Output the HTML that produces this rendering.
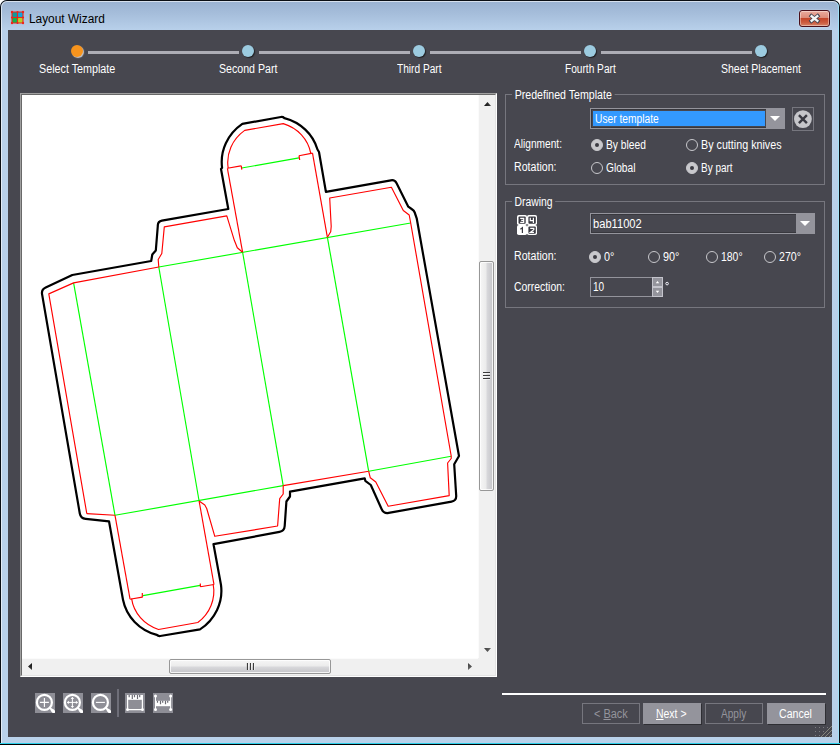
<!DOCTYPE html>
<html>
<head>
<meta charset="utf-8">
<title>Layout Wizard</title>
<style>
*{box-sizing:border-box;margin:0;padding:0}
html,body{width:840px;height:745px;overflow:hidden;background:#fff}
body{font-family:"Liberation Sans",sans-serif;font-size:12px;color:#fff;position:relative}
.abs{position:absolute}
#win{position:absolute;left:0;top:0;width:840px;height:745px;border-radius:7px 7px 0 0;overflow:hidden;
 background:linear-gradient(to bottom,#99b1d0 0px,#a6bedb 14px,#b8d0ea 30px,#b9d1ea 100%);}
#winedge{position:absolute;left:0;top:0;width:840px;height:745px;border-radius:7px 7px 0 0;border:1px solid #0a0e14;border-bottom:none}
#winhi{position:absolute;left:1px;top:1px;width:838px;height:742px;border-radius:6px 6px 0 0;border:1px solid rgba(255,255,255,.6);border-bottom:none;border-right-color:rgba(160,228,250,.9)}
#title{position:absolute;left:29.200px;top:11.6px;font-size:12px;line-height:14px;color:#000;white-space:nowrap;transform-origin:0 0;transform:scaleX(.988)}
#client{position:absolute;left:8px;top:30px;width:824px;height:707px;background:#47474f}
#closebtn{position:absolute;left:799px;top:10px;width:31px;height:17px;border:1px solid #4a0f1a;border-radius:3px;
 background:linear-gradient(to bottom,#eaab9e 0%,#dc8a78 47%,#c4462b 50%,#cb5a3e 75%,#d88266 100%);box-shadow:inset 0 0 0 1px rgba(255,255,255,.4),0 0 2px rgba(255,255,255,.5)}
.lbl{position:absolute;white-space:nowrap;font-size:12px;line-height:14px;color:#fff;transform-origin:0 0}
.stepline{position:absolute;top:51px;height:3px;background:#adadb5}
.dot{position:absolute;width:12px;height:12px;border-radius:50%;background:#9ccbe0;box-shadow:1px 1px 1px rgba(0,0,0,.55)}
.grp{position:absolute;border:1px solid #76767e}
.grp>span{position:absolute;left:6px;top:-7px;background:#47474f;padding:0 3px;font-size:12px;line-height:14px;white-space:nowrap;transform-origin:0 0}
.radio{position:absolute;width:12px;height:12px;border-radius:50%;border:1px solid #c8c8cc;background:#47474f}
.radio.on{background:#c8c8cc;border-color:#c8c8cc}
.radio.on:after{content:"";position:absolute;left:3px;top:3px;width:4px;height:4px;border-radius:50%;background:#3a3a42}
.combo{position:absolute;height:21px;border:1px solid #94949c;background:#47474f;box-shadow:inset 0 0 0 1px #38383e}
.combo .dd{position:absolute;right:-1px;top:-1px;width:19px;height:21px;background:#94949c}
.combo .dd:after{content:"";position:absolute;left:3.600px;top:8px;border-left:5px solid transparent;border-right:5px solid transparent;border-top:5px solid #fff}
.btn{position:absolute;top:703px;width:58px;height:21px;font-size:12px;white-space:nowrap}
.btn span{position:absolute;top:3.8px;line-height:14px;transform-origin:0 0;white-space:nowrap}
.btn.en{background:#94949c;color:#fff;box-shadow:1px 1px 0 rgba(0,0,0,.35)}
.btn.dis{border:1px solid #76767e;color:#94949c}
.btn.dis span{margin:-1px 0 0 -1px}
.tb{position:absolute;top:693px;width:20px;height:20px;background:#8c8c94}
u{text-decoration:underline}
</style>
</head>
<body>
<div id="win"></div>
<div id="winedge"></div>
<div id="winhi"></div>

<!-- title bar -->
<svg class="abs" style="left:10px;top:10px" width="15" height="15" viewBox="0 0 15 15">
 <rect x="2" y="2" width="5.500" height="5.500" fill="#0f9a9c"/>
 <rect x="7.500" y="2" width="5.500" height="5.500" fill="#12a6dc"/>
 <rect x="2" y="7.500" width="5.500" height="5.500" fill="#12b24e"/>
 <rect x="7.500" y="7.500" width="5.500" height="5.500" fill="#b4d22c"/>
 <path d="M2 2H13V13H2Z M7.500 2V13 M2 7.500H13" stroke="#e8281c" stroke-width="1.100" fill="none"/>
 <g fill="#f02418"><circle cx="2" cy="2" r="1.200"/><circle cx="7.500" cy="2" r="1.100"/><circle cx="13" cy="2" r="1.200"/><circle cx="2" cy="7.500" r="1.100"/><circle cx="13" cy="7.500" r="1.100"/><circle cx="2" cy="13" r="1.200"/><circle cx="7.500" cy="13" r="1.100"/><circle cx="13" cy="13" r="1.200"/><circle cx="7.500" cy="7.500" r="1"/></g>
</svg>
<div id="title">Layout Wizard</div>
<div id="closebtn"></div>
<svg class="abs" style="left:807px;top:12px" width="15" height="13" viewBox="0 0 15 13">
 <path d="M4.400 4L10.600 9M10.600 4L4.400 9" stroke="#3c4252" stroke-width="3.800" fill="none" stroke-linecap="square"/>
 <path d="M4.600 4.200L10.400 8.800M10.400 4.200L4.600 8.800" stroke="#f4f4f4" stroke-width="2.300" fill="none" stroke-linecap="square"/>
</svg>

<div id="client"></div>

<!-- steps -->
<div class="stepline" style="left:88px;width:151px"></div>
<div class="stepline" style="left:259px;width:151px"></div>
<div class="stepline" style="left:430px;width:151px"></div>
<div class="stepline" style="left:601px;width:151px"></div>
<div class="dot" style="left:71px;top:45px;background:#f7941d;box-shadow:1px 1px 1px rgba(255,255,255,.7)"></div>
<div class="dot" style="left:242px;top:45px"></div>
<div class="dot" style="left:413px;top:45px"></div>
<div class="dot" style="left:584px;top:45px"></div>
<div class="dot" style="left:755px;top:45px"></div>
<div class="lbl" id="s1" style="left:38.5px;top:61.8px;transform:scaleX(.896)">Select Template</div>
<div class="lbl" id="s2" style="left:219px;top:61.8px;transform:scaleX(.884)">Second Part</div>
<div class="lbl" id="s3" style="left:397.3px;top:61.8px;transform:scaleX(.845)">Third Part</div>
<div class="lbl" id="s4" style="left:565.3px;top:61.8px;transform:scaleX(.845)">Fourth Part</div>
<div class="lbl" id="s5" style="left:721px;top:61.8px;transform:scaleX(.875)">Sheet Placement</div>

<!-- canvas panel -->
<div class="abs" id="panel" style="left:20px;top:93px;width:477px;height:584px;background:#fff;border-style:solid;border-width:1px;border-color:#a0a0a0 #fff #fff #a0a0a0"></div>
<div class="abs" style="left:21px;top:94px;width:475px;height:582px;border-style:solid;border-width:1px;border-color:#696969 #e3e3e3 #e3e3e3 #696969"></div>
<!-- scrollbars -->
<div class="abs" id="vsb" style="left:478px;top:95px;width:17px;height:563px;background:#f0f0f0"></div>
<div class="abs" id="hsb" style="left:22px;top:658px;width:456px;height:17px;background:#f0f0f0"></div>
<div class="abs" style="left:478px;top:658px;width:17px;height:17px;background:#f0f0f0"></div>
<div class="abs" id="vthumb" style="left:479px;top:261px;width:15px;height:230px;border:1px solid #979797;border-radius:2px;background:linear-gradient(to right,#f6f6f6 0%,#ebebeb 48%,#d9d9dc 52%,#c4c4c8 100%);box-shadow:inset 0 0 0 1px rgba(255,255,255,.8)"></div>
<div class="abs" id="hthumb" style="left:169px;top:659px;width:162px;height:15px;border:1px solid #979797;border-radius:2px;background:linear-gradient(to bottom,#f6f6f6 0%,#ebebeb 48%,#d9d9dc 52%,#c4c4c8 100%);box-shadow:inset 0 0 0 1px rgba(255,255,255,.8)"></div>
<svg class="abs" style="left:478px;top:95px" width="17" height="563" viewBox="0 0 17 563"><defs><linearGradient id="ag" x1="0" y1="0" x2="1" y2="1"><stop offset="0" stop-color="#101010"/><stop offset="1" stop-color="#6a6a6a"/></linearGradient></defs><rect x="0" y="0" width="1" height="563" fill="#fbfbfb"/>
 <path d="M6 11h7l-3.500-4z M6 553h7l-3.500 4z" fill="url(#ag)"/>
 <path d="M5 277.500h7M5 280.500h7M5 283.500h7" stroke="#3c3c3c" stroke-width="1.200"/><path d="M5 278.500h7M5 281.500h7M5 284.500h7" stroke="#fff" stroke-width="0.800" opacity=".8"/>
</svg>
<svg class="abs" style="left:22px;top:658px" width="456" height="17" viewBox="0 0 456 17"><rect x="0" y="0" width="456" height="1" fill="#fbfbfb"/>
 <path d="M10 5v7l-4-3.500z M446 5v7l4-3.500z" fill="url(#ag)"/>
 <path d="M225.500 5v7M228.500 5v7M231.500 5v7" stroke="#3c3c3c" stroke-width="1.200"/><path d="M226.500 5v7M229.500 5v7M232.500 5v7" stroke="#fff" stroke-width="0.800" opacity=".8"/>
</svg>

<!-- DRAWING -->
<svg class="abs" id="dwg" style="left:22px;top:95px" width="456" height="563" viewBox="22 95 456 563">
<path d="M42.1 294.4 Q41.2 289.5 45.7 287.4 L72.3 275.0 L151.2 261.0 L152.3 254.5 L155.8 250.5 L157.8 226.0 L157.8 225.4 Q158.0 221.4 161.9 220.7 L228.3 209.0 L221.0 169.0 L222.1 167.8 A48.5 46.0 -10 0 1 242.3 123.9 L280.9 117.0 Q282.9 116.7 284.4 118.1 A48.5 46.0 -10 0 1 317.5 149.5 L319.0 152.0 L325.9 191.8 L390.9 180.3 Q394.8 179.6 396.6 183.2 L408.3 206.7 L412.3 209.5 Q414.0 210.6 414.7 212.5 L416.7 218.3 L459.0 456.0 L454.2 464.2 L456.2 495.7 Q456.5 500.7 451.6 501.6 L388.7 512.9 Q383.8 513.8 381.7 509.2 L370.8 485.0 L365.3 480.8 L364.7 478.3 L290.0 491.6 L290.0 496.5 L286.4 501.5 L284.7 526.0 Q284.4 531.0 279.5 531.9 L213.5 544.2 L221.0 585.0 A48.5 46.0 -10 0 1 200.0 629.4 L160.2 636.0 Q158.2 636.3 156.8 634.9 A48.5 46.0 -10 0 1 123.0 599.8 L109.0 521.3 L85.7 518.9 Q80.7 518.4 79.8 513.5 Z" fill="none" stroke="#000" stroke-width="2.2" stroke-linejoin="round"/>
<g fill="none" stroke="#00ff00" stroke-width="1.15"><path d="M73.6 282.9 L115.0 515.3"/><path d="M158.8 267.0 L199.1 501.0"/><path d="M242.6 252.2 L283.2 485.6"/><path d="M327.4 237.3 L368.7 471.3"/><path d="M158.8 267.0 L410.7 223.0"/><path d="M115.0 515.3 L283.2 485.6"/><path d="M368.7 471.3 L451.2 456.3"/><path d="M241.7 168.0 L299.0 157.9"/><path d="M143.0 595.6 L200.2 585.4"/></g>
<g fill="none" stroke="#ff0000" stroke-width="1.15" stroke-linejoin="round"><path d="M86.8 513.6 L48.8 293.9 L73.6 282.9 L158.8 267.0"/><path d="M86.8 513.6 L115.0 515.3"/><path d="M158.8 267.0 L158.2 259.5 L161.8 253.5 L164.3 226.9 L226.8 215.9 L234.3 240.3 L237.3 247.7 L242.6 252.2"/><path d="M242.6 252.2 L227.4 168.3"/><path d="M228.2 168.2 A41.5 39.0 -10 0 1 244.7 130.4 L283.3 123.6 A41.5 39.0 -10 0 1 310.8 153.4"/><path d="M312.5 153.1 L327.4 237.3"/><path d="M227.4 168.3 L240.9 165.9"/><path d="M241.2 165.6 L241.8 169.6"/><path d="M299.0 155.7 L312.5 153.1"/><path d="M299.0 155.7 L299.7 160.0"/><path d="M327.4 237.3 L330.7 231.8 L331.2 226.5 L329.7 198.0 L391.4 187.3 L403.3 210.5 L409.2 215.0 L410.7 223.0 L451.2 456.0"/><path d="M368.7 471.3 L370.3 477.8 L375.8 482.0 L388.2 506.2 L449.2 495.6 L447.6 463.0 L451.2 458.5 L451.2 456.0"/><path d="M283.2 485.6 L368.7 471.3"/><path d="M199.1 501.0 L204.8 505.0 L206.7 508.5 L214.8 536.3 L277.6 526.0 L279.7 498.6 L283.2 494.0 L283.2 485.6"/><path d="M115.0 515.3 L130.0 598.8"/><path d="M131.6 598.7 A41.5 39.0 -10 0 0 158.5 629.5 L197.8 622.5 A41.5 39.0 -10 0 0 213.2 584.5"/><path d="M214.0 584.6 L199.1 501.0"/><path d="M129.8 599.2 L142.3 597.1"/><path d="M142.3 593.0 L142.3 597.4"/><path d="M200.3 583.6 L200.4 586.9"/><path d="M200.4 586.8 L214.0 584.5"/></g>
</svg>

<!-- toolbar -->
<svg class="abs" style="left:35px;top:693px" width="20" height="20" viewBox="0 0 20 20"><rect width="20" height="20" fill="#8e8e96"/>
 <path d="M14.500 14.500L17 17" stroke="#fff" stroke-width="1.800"/><path d="M17.400 17.400L18.600 18.600" stroke="#fff" stroke-width="3.200" stroke-linecap="round"/><circle cx="9.400" cy="9.400" r="7.500" fill="none" stroke="#fff" stroke-width="2.200"/>
 <path d="M4.900 9.400H13.900M9.400 4.900V13.900" stroke="#fff" stroke-width="1.1"/></svg>
<svg class="abs" style="left:63px;top:693px" width="20" height="20" viewBox="0 0 20 20"><rect width="20" height="20" fill="#8e8e96"/>
 <path d="M14.500 14.500L17 17" stroke="#fff" stroke-width="1.800"/><path d="M17.400 17.400L18.600 18.600" stroke="#fff" stroke-width="3.200" stroke-linecap="round"/><circle cx="9.400" cy="9.400" r="7.500" fill="none" stroke="#fff" stroke-width="2.200"/>
 <path d="M4.600 9.400H14.200M9.400 4.600V14.200" stroke="#fff" stroke-width="1"/>
 <path d="M3.700 9.400l2.200-1.700v3.400zM15.100 9.400l-2.200-1.700v3.400zM9.400 3.700l-1.700 2.200h3.400zM9.400 15.100l-1.700-2.200h3.400z" fill="#fff"/></svg>
<svg class="abs" style="left:91px;top:693px" width="20" height="20" viewBox="0 0 20 20"><rect width="20" height="20" fill="#8e8e96"/>
 <path d="M14.500 14.500L17 17" stroke="#fff" stroke-width="1.800"/><path d="M17.400 17.400L18.600 18.600" stroke="#fff" stroke-width="3.200" stroke-linecap="round"/><circle cx="9.400" cy="9.400" r="7.500" fill="none" stroke="#fff" stroke-width="2.200"/>
 <path d="M4.900 9.400H13.900" stroke="#fff" stroke-width="1.100"/></svg>
<div class="abs" style="left:117px;top:689px;width:2px;height:28px;background:#6e6e78"></div>
<svg class="abs" style="left:125px;top:693px" width="20" height="20" viewBox="0 0 20 20"><rect width="20" height="20" fill="#8e8e96"/>
 <rect x="2" y="2" width="16" height="4.800" fill="#fff"/>
 <path d="M4.200 2v2.200M7.300 2v3.900M9.500 2v2.200M12.500 2v3.900M14.700 2v2.200" stroke="#6c6c74" stroke-width="1.200"/>
 <path d="M2.600 6v10.700H17.400V6" fill="none" stroke="#fff" stroke-width="1.200"/>
 <circle cx="2.500" cy="16.700" r="1.400" fill="#fff"/><circle cx="17.500" cy="16.700" r="1.400" fill="#fff"/></svg>
<svg class="abs" style="left:153px;top:693px" width="20" height="20" viewBox="0 0 20 20"><rect width="20" height="20" fill="#8e8e96"/>
 <rect x="3" y="7.800" width="14.500" height="5.400" fill="#fff"/>
 <path d="M4.500 7.800v2M7.500 7.800v3.500M9.700 7.800v2M12.500 7.800v3.500M14.700 7.800v2" stroke="#6c6c74" stroke-width="1.200"/>
 <path d="M2.500 3v13.500M17.600 3v13.500" fill="none" stroke="#fff" stroke-width="1"/>
 <g fill="#fff"><circle cx="2.500" cy="3" r="1.500"/><circle cx="2.500" cy="16.500" r="1.500"/><circle cx="17.600" cy="3" r="1.500"/><circle cx="17.600" cy="16.500" r="1.500"/></g></svg>

<!-- right panel -->
<div class="grp" style="left:505px;top:94px;width:320px;height:91px"><span style="transform:scaleX(.885)">Predefined Template</span></div>
<div class="combo" style="left:590px;top:108px;width:195px"><div class="abs" style="left:2px;top:2px;width:172px;height:15px;background:#3399ff"></div><div class="lbl" style="left:3.5px;top:2.8px;transform:scaleX(.854)">User template</div><div class="dd"></div></div>
<div class="abs" style="left:792px;top:107px;width:22px;height:24px;border:1px solid #76767e"></div>
<svg class="abs" style="left:793px;top:109px" width="20" height="20" viewBox="0 0 20 20"><circle cx="9.900" cy="10.100" r="8.900" fill="#c6c6ca"/><path d="M5.900 6.100l8 8M13.900 6.100l-8 8" stroke="#3a3a42" stroke-width="2.400"/></svg>
<div class="lbl" style="left:514px;top:136.8px;transform:scaleX(.847)">Alignment:</div>
<div class="lbl" style="left:513.8px;top:159.8px;transform:scaleX(.885)">Rotation:</div>
<div class="radio on" style="left:591px;top:139px"></div><div class="lbl" style="left:606px;top:137.8px;transform:scaleX(.854)">By bleed</div>
<div class="radio" style="left:686px;top:139px"></div><div class="lbl" style="left:701px;top:137.8px;transform:scaleX(.895)">By cutting knives</div>
<div class="radio" style="left:591px;top:162px"></div><div class="lbl" style="left:605.5px;top:160.7px;transform:scaleX(.85)">Global</div>
<div class="radio on" style="left:686px;top:162px"></div><div class="lbl" style="left:701px;top:160.7px;transform:scaleX(.831)">By part</div>

<div class="grp" style="left:505px;top:201px;width:320px;height:107px"><span style="transform:scaleX(.863)">Drawing</span></div>
<svg class="abs" style="left:517px;top:215px" width="20" height="20" viewBox="0 0 20 20">
 <g fill="#fff"><rect x="0" y="0" width="10" height="10" rx="1.800"/><rect x="10" y="0" width="10" height="10" rx="1.800"/><rect x="0" y="10" width="10" height="10" rx="1.800"/><rect x="10" y="10" width="10" height="10" rx="1.800"/></g>
 <g fill="#3a3a42"><rect x="1.500" y="1.600" width="7.200" height="7.200" rx="1"/><rect x="11.400" y="1.600" width="7.400" height="7.200" rx="1"/><rect x="11.400" y="11.600" width="7.400" height="7.200" rx="1"/></g>
 <g fill="none" stroke="#fff" stroke-width="1.200"><path d="M3.200 3.300H6.700V5.300H4.200M6.700 5.300V7.300H3.200"/><path d="M13.300 2.700V5.600H16.600M16.400 2.700V8"/><path d="M13.200 13.300H16.800V14.800L13.400 17.300H17"/></g>
 <path d="M3.400 14.300L5.400 12.800V17.900" fill="none" stroke="#3a3a42" stroke-width="1.200"/>
</svg>
<div class="combo" style="left:590px;top:213px;width:225px"><div class="lbl" style="left:2.3px;top:2.8px;transform:scaleX(.928)">bab11002</div><div class="dd"></div></div>
<div class="lbl" style="left:513.8px;top:248.7px;transform:scaleX(.885)">Rotation:</div>
<div class="radio on" style="left:589px;top:251px"></div><div class="lbl" style="left:603.8px;top:249.8px;transform:scaleX(.9)">0°</div>
<div class="radio" style="left:648px;top:251px"></div><div class="lbl" style="left:662.6px;top:249.8px;transform:scaleX(.9)">90°</div>
<div class="radio" style="left:706px;top:251px"></div><div class="lbl" style="left:720.8px;top:249.8px;transform:scaleX(.87)">180°</div>
<div class="radio" style="left:764px;top:251px"></div><div class="lbl" style="left:779px;top:249.8px;transform:scaleX(.882)">270°</div>
<div class="lbl" style="left:513.7px;top:279.8px;transform:scaleX(.866)">Correction:</div>
<div class="abs" style="left:590px;top:277px;width:73px;height:20px;border:1px solid #94949c"></div>
<div class="abs" style="left:652px;top:277px;width:11px;height:20px;background:#c4c4cc"></div>
<div class="abs" style="left:653px;top:278px;width:9px;height:8px;background:#94949c"></div>
<div class="abs" style="left:653px;top:288px;width:9px;height:8px;background:#94949c"></div>
<svg class="abs" style="left:653px;top:278px" width="9" height="18" viewBox="0 0 9 18"><path d="M2.800 5.200h3.400l-1.700-2.200z M2.800 12.800h3.400l-1.700 2.200z" fill="#fff"/></svg>
<svg class="abs" style="left:664px;top:280px" width="7" height="7" viewBox="0 0 7 7"><circle cx="3.100" cy="3.600" r="1.300" fill="none" stroke="#f0f0f8" stroke-width="1"/></svg>
<div class="lbl" style="left:593.3px;top:279.8px;transform:scaleX(.838)">10</div>


<!-- bottom -->
<div class="abs" style="left:0;top:743px;width:840px;height:1px;background:#2cd0ea"></div>
<div class="abs" style="left:0;top:744px;width:840px;height:1px;background:#000"></div>
<svg class="abs" style="left:812px;top:724px" width="20" height="13" viewBox="812 724 20 13">
 <g fill="#7c7c80"><rect x="815" y="727" width="1" height="1"/><rect x="819" y="727" width="1" height="1"/><rect x="823" y="727" width="1" height="1"/><rect x="827" y="727" width="1" height="1"/>
 <rect x="815" y="731" width="1" height="1"/><rect x="819" y="731" width="1" height="1"/><rect x="823" y="731" width="1" height="1"/>
 <rect x="815" y="735" width="1" height="1"/><rect x="819" y="735" width="1" height="1"/></g>
 <path d="M821 737L832 726M825 737L832 730M829 737L832 734" stroke="#87877e" stroke-width="1"/>
</svg>

<div class="abs" style="left:502px;top:693px;width:324px;height:2px;background:#fff"></div>
<div class="btn dis" style="left:582px"><span style="left:11.7px;transform:scaleX(.913)">&lt; <u>B</u>ack</span></div>
<div class="btn en" style="left:643px"><span style="left:13.3px;transform:scaleX(.871)"><u>N</u>ext &gt;</span></div>
<div class="btn dis" style="left:705px"><span style="left:16.2px;transform:scaleX(.839)">Apply</span></div>
<div class="btn en" style="left:767px"><span style="left:11.6px;transform:scaleX(.881)">Cancel</span></div>
</body>
</html>
